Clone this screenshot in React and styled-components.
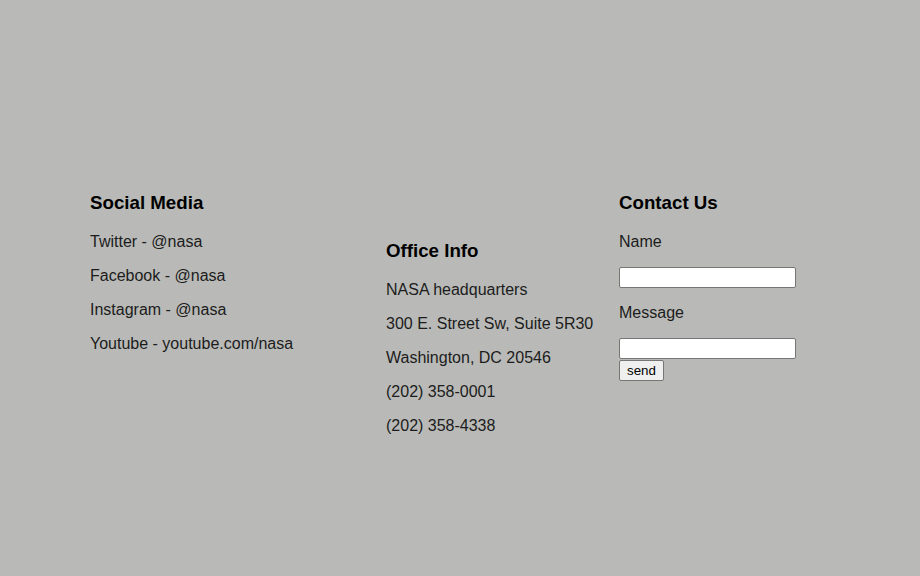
import React from "react";
import styled, { createGlobalStyle } from "styled-components";

const Global = createGlobalStyle`
  html, body {
    margin: 0;
    padding: 0;
    background: #b9bab7;
    font-family: "Liberation Sans", Arial, sans-serif;
    color: #1c1c1c;
  }
`;

const Page = styled.div`
  min-height: 576px;
  box-sizing: border-box;
  padding-top: 173px;
`;

const Footer = styled.footer`
  display: grid;
  grid-template-columns: 296px 233px auto;
  padding-left: 90px;
  align-items: start;
`;

const Column = styled.section`
  display: flex;
  flex-direction: column;
  margin-top: ${(p) => p.$offset || 0}px;
`;

const Heading = styled.h3`
  margin: 18.72px 0 19px;
  font-size: 18.72px;
  font-weight: bold;
  color: #000;
  line-height: 22px;
`;

const Line = styled.p`
  margin: 0 0 16px;
  font-size: 16px;
  line-height: 18px;
`;

const Label = styled.label`
  display: block;
  margin: 0 0 16px;
  font-size: 16px;
  line-height: 18px;
`;

const Input = styled.input`
  display: block;
  box-sizing: border-box;
  width: 177px;
  height: 21px;
  padding: 1px 2px;
  border: 1px solid #767676;
  border-radius: 2px;
  background: #fff;
  font-family: "Liberation Sans", Arial, sans-serif;
  font-size: 13.33px;
  margin: 0 0 ${(p) => (p.$last ? 1 : 16)}px;
`;

const Send = styled.button`
  align-self: flex-start;
  box-sizing: border-box;
  height: 21px;
  width: 45px;
  padding: 0 6px;
  border: 1px solid #767676;
  border-radius: 2px;
  background: #efefef;
  color: #000;
  font-family: "Liberation Sans", Arial, sans-serif;
  font-size: 13.33px;
  line-height: 17px;
  cursor: pointer;
`;

export default function App() {
  return (
    <>
      <Global />
      <Page>
        <Footer>
          <Column>
            <Heading>Social Media</Heading>
            <Line>Twitter - @nasa</Line>
            <Line>Facebook - @nasa</Line>
            <Line>Instagram - @nasa</Line>
            <Line>Youtube - youtube.com/nasa</Line>
          </Column>
          <Column $offset={48}>
            <Heading>Office Info</Heading>
            <Line>NASA headquarters</Line>
            <Line>300 E. Street Sw, Suite 5R30</Line>
            <Line>Washington, DC 20546</Line>
            <Line>(202) 358-0001</Line>
            <Line>(202) 358-4338</Line>
          </Column>
          <Column as="form" onSubmit={(e) => e.preventDefault()}>
            <Heading>Contact Us</Heading>
            <Label htmlFor="name">Name</Label>
            <Input id="name" type="text" />
            <Label htmlFor="message">Message</Label>
            <Input id="message" type="text" $last />
            <Send type="submit">send</Send>
          </Column>
        </Footer>
      </Page>
    </>
  );
}
